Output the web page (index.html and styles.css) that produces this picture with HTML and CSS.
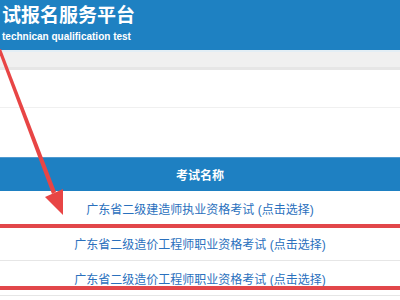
FILE: index.html
```html
<!DOCTYPE html>
<html>
<head>
<meta charset="utf-8">
<link rel="stylesheet" href="styles.css">
</head>
<body>
<div class="page">
  <div class="top">
    <h1 class="title">试报名服务平台</h1>
    <p class="subtitle">technican qualification test</p>
  </div>
  <div class="nav"></div>
  <div class="notice"></div>
  <div class="exam-list">
    <table class="exam-table">
      <thead>
        <tr><th>考试名称</th></tr>
      </thead>
      <tbody>
        <tr><td><a href="#">广东省二级建造师执业资格考试 (点击选择)</a></td></tr>
        <tr><td><a href="#">广东省二级造价工程师职业资格考试 (点击选择)</a></td></tr>
        <tr><td><a href="#">广东省二级造价工程师职业资格考试 (点击选择)</a></td></tr>
      </tbody>
    </table>
    <div class="mark-box"></div>
  </div>
  <svg class="mark-arrow" width="400" height="300" viewBox="0 0 400 300">
    <polygon points="-2,50 1,49 56,192 52,194" fill="#e84545"/>
    <polygon points="45,197 63,189 63,215" fill="#e84545"/>
  </svg>
</div>
</body>
</html>
```
FILE: styles.css
```css
body {
	margin:0;
	font-family:"Liberation Sans", "Noto Sans CJK SC", sans-serif;
}
.page {
	position:relative;
	width:400px;
	height:300px;
	overflow:hidden;
}
.top {
	height:50px;
	background-color:#1e81c2;
	color:#fff;
	padding-left:2px;
	box-sizing:border-box;
}
.title {
	margin:0;
	font-size:19px;
	line-height:27px;
	font-weight:bold;
	font-family:"Noto Sans CJK SC", sans-serif;
}
.subtitle {
	margin:0;
	padding-top:4px;
	font-size:10px;
	line-height:12px;
	font-weight:bold;
}
.nav {
	height:20px;
	box-sizing:border-box;
	background-color:#f0f0f0;
	border-top:2px solid #e3eef5;
	border-bottom:3px solid #e6e6e6;
}
.notice {
	height:38px;
	box-sizing:border-box;
	border-bottom:1px solid #f0f0f0;
}
.exam-list {
	position:relative;
	margin-top:49px;
}
.exam-table {
	width:100%;
	border-collapse:collapse;
	font-size:12px;
	text-align:center;
}
.exam-table th {
	height:33px;
	padding:0;
	background-color:#1e80c2;
	border-top:1px solid #4f9ad0;
	color:#fff;
	font-weight:bold;
	font-family:"Noto Sans CJK SC", sans-serif;
}
.exam-table td {
	height:34px;
	padding:0;
	border-bottom:1px solid #e6e6e6;
}
.exam-table a {
	color:#2a70bd;
	text-decoration:none;
}
.mark-box {
	position:absolute;
	left:0;
	right:0;
	top:67px;
	height:66px;
	box-sizing:border-box;
	border-top:4px solid #e2474a;
	border-bottom:4px solid #e2474a;
}
.mark-arrow {
	position:absolute;
	left:0;
	top:0;
}
```
